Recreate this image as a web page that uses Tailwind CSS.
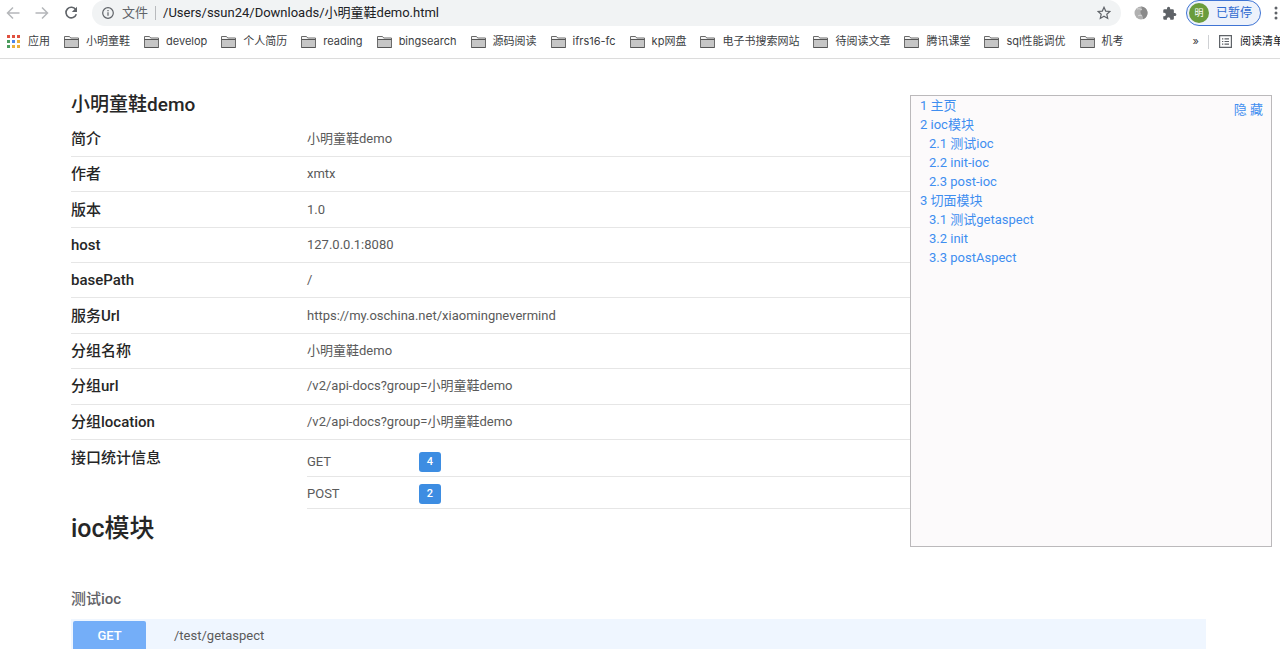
<!DOCTYPE html>
<html lang="zh-CN">
<head>
<meta charset="utf-8">
<title>小明童鞋demo</title>
<script src="https://cdn.jsdelivr.net/npm/@tailwindcss/browser@4"></script>
</head>
<body class="relative h-screen overflow-hidden bg-white font-['Roboto','Noto_Sans_CJK_SC',sans-serif] text-[13px] text-[#5a5a5a]">
<svg class="hidden">
  <symbol id="folder" viewBox="0 0 15 12">
    <path d="M.5 11.5v-11h5l1.200 1.500h7.800v9.500z" fill="#f4f4f4" stroke="#6b6b6b"/>
    <path d="M1 4h13v7H1z" fill="#c6c6c6"/>
    <path d="M.5 3.500h14M.5 11.500h14" stroke="#555"/>
  </symbol>
</svg>

<header class="border-b border-[#dcdcdc]">
  <div class="flex h-[26px] items-center pl-[6px]">
    <button aria-label="后退" class="w-[29px] shrink-0"><svg class="h-[14px] w-[14px]" viewBox="0 0 14 14" fill="none" stroke="#b5b7ba" stroke-width="1.500"><path d="M13.500 7H2M7 1.500 1.500 7 7 12.500"/></svg></button>
    <button aria-label="前进" class="w-[29px] shrink-0"><svg class="h-[14px] w-[14px]" viewBox="0 0 14 14" fill="none" stroke="#b5b7ba" stroke-width="1.500"><path d="M.5 7H12M7 1.500 12.500 7 7 12.500"/></svg></button>
    <button aria-label="刷新" class="w-[28px] shrink-0"><svg class="h-[14px] w-[14px]" viewBox="0 0 14 14" fill="none" stroke="#5f6368" stroke-width="1.600"><path d="M11.700 3.600A5.300 5.300 0 1 0 12.300 8.300"/><path d="M13 .8V6H7.800z" fill="#5f6368" stroke="none"/></svg></button>
    <div class="flex h-[26px] flex-1 items-center rounded-full bg-[#f1f3f4] pl-[10px] pr-[10px]">
      <svg class="h-3 w-3 shrink-0" viewBox="0 0 12 12" fill="none" stroke="#5f6368" stroke-width="1.200"><circle cx="6" cy="6" r="5.300"/><path d="M6 5.300v3.400M6 3v1.300"/></svg>
      <span class="ml-[8px] text-[13px] whitespace-nowrap text-[#5f6368]">文件</span>
      <span class="mx-[7px] h-[14px] w-px bg-[#b8babd]"></span>
      <input aria-label="地址" value="/Users/ssun24/Downloads/小明童鞋demo.html" class="min-w-0 flex-1 bg-transparent text-[13px] text-[#202124] outline-none">
      <button aria-label="收藏"><svg class="h-[14px] w-[14px]" viewBox="0 0 14 14" fill="none" stroke="#5f6368" stroke-width="1.200"><path d="m7 1.300 1.700 3.800 4.200.4-3.100 2.800.9 4.100L7 10.300l-3.700 2.100.9-4.100L1.100 5.500l4.200-.4z"/></svg></button>
    </div>
    <button aria-label="扩展" class="ml-[13px] shrink-0"><svg class="h-[14px] w-[14px]" viewBox="0 0 14 14"><circle cx="7" cy="7" r="6.500" fill="#b0b0b0"/><path d="M7 .5a6.500 6.500 0 0 1 2 12.700C10 10 6 8 6.500 5.500 7 3.500 9 3 7 .5z" fill="#8a8a8a"/><path d="M3 3c2-.5 4 0 5 1M4 10c1-1 3-1 4 0" stroke="#d8d8d8" fill="none"/></svg></button>
    <button aria-label="扩展程序" class="ml-[14px] shrink-0"><svg class="h-[15px] w-[15px]" viewBox="0 0 24 24" fill="#5f6368"><path d="M20.500 11H19V7a2 2 0 0 0-2-2h-4V3.500a2.500 2.500 0 0 0-5 0V5H4a2 2 0 0 0-2 2v3.800h1.500a2.700 2.700 0 0 1 0 5.400H2V20a2 2 0 0 0 2 2h3.800v-1.500a2.700 2.700 0 0 1 5.400 0V22H17a2 2 0 0 0 2-2v-4h1.500a2.500 2.500 0 0 0 0-5z"/></svg></button>
    <button class="ml-[9px] flex h-[26px] w-[75px] shrink-0 items-center rounded-full border border-[#3f74d4] bg-[#edf2fb] pl-[2px] text-xs whitespace-nowrap text-[#2f6ad0]"><span class="mr-[7px] flex h-[20px] w-[20px] items-center justify-center rounded-full bg-[#6a9c3c] text-[9px] text-white">明</span>已暂停</button>
    <button aria-label="菜单" class="ml-[11px] w-[8px] shrink-0"><svg class="h-[14px] w-[7px]" viewBox="0 0 7 14" fill="#5f6368"><circle cx="4" cy="2" r="1.500"/><circle cx="4" cy="7" r="1.500"/><circle cx="4" cy="12" r="1.500"/></svg></button>
  </div>
  <nav aria-label="书签" class="flex h-8 items-center overflow-hidden pb-px pl-[7px] font-['Inter','Noto_Sans_CJK_SC',sans-serif] text-[11px] whitespace-nowrap text-[#3c4043]">
    <a href="#" class="mr-[14px] flex shrink-0 items-center gap-[8px]"><svg class="h-[13px] w-[13px]" viewBox="0 0 13 13"><path d="M0 0h3v3H0zM5 0h3v3H5zM10 0h3v3h-3z" fill="#e0503f"/><path d="M0 5h3v3H0z" fill="#4a9c5d"/><path d="M5 5h3v3H5z" fill="#4c86ec"/><path d="M10 5h3v3h-3z" fill="#eab03c"/><path d="M0 10h3v3H0z" fill="#4a9c5d"/><path d="M5 10h3v3H5zM10 10h3v3h-3z" fill="#eab03c"/></svg>应用</a>
    <div class="flex min-w-0 flex-1 items-center gap-[14px] overflow-hidden">
      <a href="#" class="flex shrink-0 items-center gap-[7px]"><svg class="h-3 w-[15px]"><use href="#folder"/></svg>小明童鞋</a>
      <a href="#" class="flex shrink-0 items-center gap-[7px]"><svg class="h-3 w-[15px]"><use href="#folder"/></svg>develop</a>
      <a href="#" class="flex shrink-0 items-center gap-[7px]"><svg class="h-3 w-[15px]"><use href="#folder"/></svg>个人简历</a>
      <a href="#" class="flex shrink-0 items-center gap-[7px]"><svg class="h-3 w-[15px]"><use href="#folder"/></svg>reading</a>
      <a href="#" class="flex shrink-0 items-center gap-[7px]"><svg class="h-3 w-[15px]"><use href="#folder"/></svg>bingsearch</a>
      <a href="#" class="flex shrink-0 items-center gap-[7px]"><svg class="h-3 w-[15px]"><use href="#folder"/></svg>源码阅读</a>
      <a href="#" class="flex shrink-0 items-center gap-[7px]"><svg class="h-3 w-[15px]"><use href="#folder"/></svg>ifrs16-fc</a>
      <a href="#" class="flex shrink-0 items-center gap-[7px]"><svg class="h-3 w-[15px]"><use href="#folder"/></svg>kp网盘</a>
      <a href="#" class="flex shrink-0 items-center gap-[7px]"><svg class="h-3 w-[15px]"><use href="#folder"/></svg>电子书搜索网站</a>
      <a href="#" class="flex shrink-0 items-center gap-[7px]"><svg class="h-3 w-[15px]"><use href="#folder"/></svg>待阅读文章</a>
      <a href="#" class="flex shrink-0 items-center gap-[7px]"><svg class="h-3 w-[15px]"><use href="#folder"/></svg>腾讯课堂</a>
      <a href="#" class="flex shrink-0 items-center gap-[7px]"><svg class="h-3 w-[15px]"><use href="#folder"/></svg>sql性能调优</a>
      <a href="#" class="flex shrink-0 items-center gap-[7px]"><svg class="h-3 w-[15px]"><use href="#folder"/></svg>机考</a>
    </div>
    <button class="mr-[9px] shrink-0" aria-label="更多书签">»</button>
    <span class="h-[14px] w-px shrink-0 bg-[#cfd1d4]"></span>
    <button class="ml-[10px] flex w-[61px] shrink-0 items-center gap-[8px] overflow-hidden text-[#202124]"><svg class="h-[13px] w-[13px] shrink-0" viewBox="0 0 13 13" fill="none" stroke="#5f6368" stroke-width="1.200"><path d="M.6.6h11.800v11.800H.6zM5.500 3.800H10M5.500 6.500H10M5.500 9.200H10M3 3.800h1.300M3 6.500h1.300M3 9.200h1.300"/></svg>阅读清单</button>
  </nav>
</header>

<main class="pt-[30px] pr-[74px] pl-[71px]">
  <h1 class="h-[33px] text-[19px] leading-8 font-medium text-[#262626]">小明童鞋demo</h1>
  <table class="h-[318px] w-full table-fixed border-collapse text-left leading-5">
    <colgroup><col class="w-[236px]"><col></colgroup>
    <tbody>
      <tr class="border-b border-[#e6e6e6]"><th scope="row" class="text-[15px] font-medium text-[#262626]">简介</th><td>小明童鞋demo</td></tr>
      <tr class="border-b border-[#e6e6e6]"><th scope="row" class="text-[15px] font-medium text-[#262626]">作者</th><td>xmtx</td></tr>
      <tr class="border-b border-[#e6e6e6]"><th scope="row" class="text-[15px] font-medium text-[#262626]">版本</th><td>1.0</td></tr>
      <tr class="border-b border-[#e6e6e6]"><th scope="row" class="text-[15px] font-medium text-[#262626]">host</th><td>127.0.0.1:8080</td></tr>
      <tr class="border-b border-[#e6e6e6]"><th scope="row" class="text-[15px] font-medium text-[#262626]">basePath</th><td>/</td></tr>
      <tr class="border-b border-[#e6e6e6]"><th scope="row" class="text-[15px] font-medium text-[#262626]">服务Url</th><td>https://my.oschina.net/xiaomingnevermind</td></tr>
      <tr class="border-b border-[#e6e6e6]"><th scope="row" class="text-[15px] font-medium text-[#262626]">分组名称</th><td>小明童鞋demo</td></tr>
      <tr class="border-b border-[#e6e6e6]"><th scope="row" class="text-[15px] font-medium text-[#262626]">分组url</th><td>/v2/api-docs?group=小明童鞋demo</td></tr>
      <tr class="border-b border-[#e6e6e6]"><th scope="row" class="text-[15px] font-medium text-[#262626]">分组location</th><td>/v2/api-docs?group=小明童鞋demo</td></tr>
    </tbody>
  </table>
  <section class="flex">
    <h2 class="w-[236px] shrink-0 pt-2 text-[15px] leading-5 font-medium text-[#262626]">接口统计信息</h2>
    <table class="mt-1 w-full table-fixed border-collapse text-left">
      <colgroup><col class="w-[112px]"><col></colgroup>
      <tbody>
        <tr class="h-8 border-b border-[#e6e6e6]"><th scope="row" class="pt-1 font-normal">GET</th><td class="pt-1"><span class="flex h-5 w-[22px] items-center justify-center rounded-[3px] bg-[#3d8de2] text-[11px] font-medium text-white">4</span></td></tr>
        <tr class="h-8 border-b border-[#e6e6e6]"><th scope="row" class="pt-1 font-normal">POST</th><td class="pt-1"><span class="flex h-5 w-[22px] items-center justify-center rounded-[3px] bg-[#3d8de2] text-[11px] font-medium text-white">2</span></td></tr>
      </tbody>
    </table>
  </section>
  <h2 class="text-[25px] leading-10 font-medium text-[#262626]">ioc模块</h2>
  <h3 class="mt-[40px] text-[15px] leading-5 font-medium text-[#5f6166]">测试ioc</h3>
  <div class="mt-[10px] flex h-10 items-start bg-[#eff6ff] p-[2px]">
    <button class="h-[30px] w-[73px] rounded-[2px] bg-[#74aef8] text-[13px] font-medium text-white">GET</button>
    <span class="ml-[28px] text-[13px] leading-[30px]">/test/getaspect</span>
  </div>
</main>

<aside class="absolute top-[95px] right-2 h-[452px] w-[362px] border border-[#bbb9bb] bg-[#fcfafb] text-[13px] text-[#3f8ef0]">
  <button class="absolute top-1 right-[8px] leading-5">隐 藏</button>
  <ul class="pl-[9px] leading-[19px]">
    <li><a href="#">1 主页</a></li>
    <li><a href="#">2 ioc模块</a>
      <ul class="pl-[9px]"><li><a href="#">2.1 测试ioc</a></li><li><a href="#">2.2 init-ioc</a></li><li><a href="#">2.3 post-ioc</a></li></ul>
    </li>
    <li><a href="#">3 切面模块</a>
      <ul class="pl-[9px]"><li><a href="#">3.1 测试getaspect</a></li><li><a href="#">3.2 init</a></li><li><a href="#">3.3 postAspect</a></li></ul>
    </li>
  </ul>
</aside>
</body>
</html>
